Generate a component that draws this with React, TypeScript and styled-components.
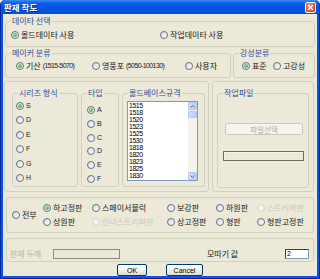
import React from "react";
import styled, { createGlobalStyle, css } from "styled-components";

const GlobalStyle = createGlobalStyle`
  html, body {
    margin: 0;
    padding: 0;
    background: #ffffff;
  }
  body {
    font-family: "Noto Sans CJK KR", "Liberation Sans", sans-serif;
  }
`;

const Window = styled.div`
  width: 320px;
  height: 279px;
  box-sizing: border-box;
  display: flex;
  flex-direction: column;
  background: #0a56e0;
  border: 1px solid #0026a8;
  border-top: none;
  border-radius: 5px 5px 0 0;
  overflow: hidden;
`;

const TitleBar = styled.div`
  height: 14px;
  flex: none;
  display: flex;
  align-items: center;
  justify-content: space-between;
  padding: 0 3px 0 3px;
  background: linear-gradient(
    180deg,
    #3a8cf8 0%,
    #0a5ee8 22%,
    #0355e2 55%,
    #0450d8 100%
  );
`;

const Title = styled.span`
  color: #ffffff;
  font-weight: bold;
  font-size: 8.5px;
  line-height: 10px;
  text-shadow: 1px 1px 0 #0a2f8a;
`;

const CloseButton = styled.div`
  width: 11px;
  height: 11px;
  box-sizing: border-box;
  border: 1px solid #ffffff;
  border-radius: 2px;
  background: radial-gradient(circle at 40% 35%, #f3a184, #d9471f 70%);
  display: flex;
  align-items: center;
  justify-content: center;
`;

const Body = styled.div`
  flex: 1;
  margin: 0 2px 2px;
  padding: 7px 2px 0;
  background: #ece9d8;
  display: flex;
  flex-direction: column;
  box-sizing: border-box;
`;

const Group = styled.div<{ $w?: number; $h: number }>`
  position: relative;
  box-sizing: border-box;
  border: 1px solid #d0d0bf;
  border-radius: 3px;
  height: ${(p) => p.$h}px;
  ${(p) => (p.$w ? `width: ${p.$w}px; flex: none;` : "flex: 1;")}
`;

const Caption = styled.span`
  position: absolute;
  top: -6px;
  left: 5px;
  padding: 0 1px;
  background: #ece9d8;
  color: #2d4f9e;
  font-size: 8px;
  line-height: 10px;
  white-space: nowrap;
`;

const Row = styled.div<{ $mt: number; $ml?: number; $gap?: number }>`
  display: flex;
  margin-top: ${(p) => p.$mt}px;
  margin-left: ${(p) => p.$ml || 0}px;
  gap: ${(p) => p.$gap || 0}px;
`;

const OptionGrid = styled.div<{ $cols: string; $pl: number; $pt: number }>`
  display: grid;
  grid-template-columns: ${(p) => p.$cols};
  align-items: center;
  height: 100%;
  box-sizing: border-box;
  padding: ${(p) => p.$pt}px 0 0 ${(p) => p.$pl}px;
`;

const PartGrid = styled(OptionGrid)`
  grid-template-rows: 14px 14px;
  align-content: center;
`;

const SpanTwoRows = styled.div`
  grid-row: 1 / span 2;
`;

const Stack = styled.div<{ $pl: number; $pt: number; $gap: number }>`
  display: flex;
  flex-direction: column;
  gap: ${(p) => p.$gap}px;
  padding: ${(p) => p.$pt}px 0 0 ${(p) => p.$pl}px;
`;

const Panel = styled.div<{ $pl: number }>`
  display: flex;
  gap: 3px;
  height: 100%;
  box-sizing: border-box;
  padding: 11px 0 0 ${(p) => p.$pl}px;
`;

const Option = styled.label<{ $off?: boolean }>`
  display: flex;
  align-items: center;
  gap: 2px;
  height: 8px;
  font-size: 8px;
  line-height: 8px;
  white-space: nowrap;
  color: ${(p) => (p.$off ? "#cbc8b9" : "#1a1a1a")};
`;

const Circle = styled.span<{ $on?: boolean; $off?: boolean }>`
  position: relative;
  flex: none;
  width: 8px;
  height: 8px;
  box-sizing: border-box;
  border-radius: 50%;
  border: 1px solid ${(p) => (p.$off ? "#d3d1c6" : "#5d7194")};
  background: ${(p) =>
    p.$off ? "#f4f3ee" : "linear-gradient(135deg, #dcdad0, #ffffff)"};
  ${(p) =>
    p.$on &&
    css`
      &::after {
        content: "";
        position: absolute;
        left: 1px;
        top: 1px;
        width: 4px;
        height: 4px;
        border-radius: 50%;
        background: radial-gradient(circle at 35% 35%, #8ee08e, #2a9a2a);
      }
    `}
`;

const Num = styled.span`
  font-family: "Liberation Sans", sans-serif;
  font-size: 7px;
  letter-spacing: -0.6px;
`;

const Letter = styled.span`
  font-family: "Liberation Sans", sans-serif;
  font-size: 7px;
`;

const ListBox = styled.div`
  width: 71px;
  height: 80px;
  box-sizing: border-box;
  border: 1px solid #7f9db9;
  background: #ffffff;
  display: flex;
`;

const ListItems = styled.div`
  flex: 1;
  overflow: hidden;
  padding-left: 1px;
  font-family: "Liberation Sans", sans-serif;
  font-size: 7px;
  line-height: 7px;
  letter-spacing: -0.5px;
  color: #000000;
`;

const ScrollBar = styled.div`
  width: 9px;
  flex: none;
  display: flex;
  flex-direction: column;
  background: #f3f2ec;
`;

const ScrollButton = styled.div<{ $mt?: number }>`
  height: ${(p) => (p.$mt ? 7 : 8)}px;
  margin-top: ${(p) => p.$mt || 0}px;
  box-sizing: border-box;
  border: 1px solid #b4c8f4;
  border-radius: 1px;
  background: linear-gradient(90deg, #d2defc, #b8cbf7);
  display: flex;
  align-items: center;
  justify-content: center;
`;

const Track = styled.div`
  flex: 1;
`;

const FileButton = styled.div`
  width: 78px;
  height: 12px;
  margin: 29px 0 0 7px;
  box-sizing: border-box;
  border: 1px solid #cbc9bc;
  border-radius: 2px;
  background: #f5f4ee;
  color: #b2afa1;
  font-size: 7.5px;
  display: flex;
  align-items: center;
  justify-content: center;
`;

const Progress = styled.div`
  width: 81px;
  height: 10px;
  margin: 16px 0 0 5px;
  box-sizing: border-box;
  border: 1px solid #6d6d68;
  box-shadow: inset 1px 1px 0 #f4f3ee;
`;

const FileColumn = styled.div`
  display: flex;
  flex-direction: column;
`;

const FieldRow = styled.div`
  display: flex;
  align-items: center;
  padding: 10px 0 0 3px;
`;

const FieldLabel = styled.span<{ $w: number; $ml?: number; $off?: boolean }>`
  width: ${(p) => p.$w}px;
  margin-left: ${(p) => p.$ml || 0}px;
  font-size: 8px;
  line-height: 10px;
  white-space: nowrap;
  color: ${(p) => (p.$off ? "#b9b6a7" : "#1a1a1a")};
`;

const TextBox = styled.div<{ $w: number; $off?: boolean }>`
  width: ${(p) => p.$w}px;
  height: 10px;
  box-sizing: border-box;
  border: 1px solid ${(p) => (p.$off ? "#8a8980" : "#7f9db9")};
  ${(p) => !p.$off && "border-top-color: #404040; border-left-color: #404040;"}
  background: ${(p) => (p.$off ? "transparent" : "#ffffff")};
  font-family: "Liberation Sans", sans-serif;
  font-size: 7px;
  line-height: 8px;
  padding-left: 1px;
  color: #000000;
`;

const ButtonRow = styled.div`
  display: flex;
  justify-content: center;
  gap: 19px;
  margin-top: 2px;
`;

const PushButton = styled.div<{ $w: number }>`
  width: ${(p) => p.$w}px;
  height: 12px;
  box-sizing: border-box;
  border: 1px solid #003c74;
  border-radius: 2px;
  background: linear-gradient(180deg, #ffffff, #f0efe8 60%, #dcdbd2);
  font-family: "Liberation Sans", sans-serif;
  font-size: 7px;
  color: #000000;
  display: flex;
  align-items: center;
  justify-content: center;
`;

type RadioProps = { on?: boolean; off?: boolean; children: React.ReactNode };

const Radio = ({ on, off, children }: RadioProps) => (
  <Option $off={off}>
    <Circle $on={on} $off={off} />
    {children}
  </Option>
);

const Arrow = ({ up }: { up?: boolean }) => (
  <svg width="5" height="3" viewBox="0 0 5 3">
    <path
      d={up ? "M0.5 2.5 L2.5 0.5 L4.5 2.5" : "M0.5 0.5 L2.5 2.5 L4.5 0.5"}
      fill="none"
      stroke="#4d6185"
      strokeWidth="1"
    />
  </svg>
);

const series = ["S", "D", "E", "F", "G", "H"];
const types = ["A", "B", "C", "D", "E", "F"];
const moldSizes = [
  "1515",
  "1518",
  "1520",
  "1523",
  "1525",
  "1530",
  "1818",
  "1820",
  "1823",
  "1825",
  "1830",
];

export default function App() {
  return (
    <>
      <GlobalStyle />
      <Window>
        <TitleBar>
          <Title>판재 작도</Title>
          <CloseButton>
            <svg width="7" height="7" viewBox="0 0 7 7">
              <path
                d="M1 1 L6 6 M6 1 L1 6"
                stroke="#ffffff"
                strokeWidth="1.4"
              />
            </svg>
          </CloseButton>
        </TitleBar>
        <Body>
          <Group $h={23}>
            <Caption>데이타 선택</Caption>
            <OptionGrid $cols="149px 1fr" $pl={5} $pt={2}>
              <Radio on>몰드데이타 사용</Radio>
              <Radio>작업데이타 사용</Radio>
            </OptionGrid>
          </Group>

          <Row $mt={6} $gap={2}>
            <Group $w={226} $h={25}>
              <Caption>메이커 분류</Caption>
              <OptionGrid $cols="76px 93px auto" $pl={10} $pt={1}>
                <Radio on>
                  기산 <Num>(1515-5070)</Num>
                </Radio>
                <Radio>
                  영풍포 <Num>(5050-100130)</Num>
                </Radio>
                <Radio>사용자</Radio>
              </OptionGrid>
            </Group>
            <Group $h={25}>
              <Caption>강성분류</Caption>
              <OptionGrid $cols="31px auto" $pl={8} $pt={1}>
                <Radio on>표준</Radio>
                <Radio>고강성</Radio>
              </OptionGrid>
            </Group>
          </Row>

          <Row $mt={3} $ml={-1} $gap={3}>
            <Group $w={205} $h={111}>
              <Panel $pl={7}>
                <Group $w={66} $h={94}>
                  <Caption>시리즈 형식</Caption>
                  <Stack $pl={3} $pt={8} $gap={6.4}>
                    {series.map((s, i) => (
                      <Radio key={s} on={i === 0}>
                        <Letter>{s}</Letter>
                      </Radio>
                    ))}
                  </Stack>
                </Group>
                <Group $w={38} $h={94}>
                  <Caption>타입</Caption>
                  <Stack $pl={5} $pt={12} $gap={5.8}>
                    {types.map((t, i) => (
                      <Radio key={t} on={i === 0}>
                        <Letter>{t}</Letter>
                      </Radio>
                    ))}
                  </Stack>
                </Group>
                <Group $w={83} $h={94}>
                  <Caption>몰드베이스규격</Caption>
                  <Stack $pl={4} $pt={7} $gap={0}>
                    <ListBox>
                      <ListItems>
                        {moldSizes.map((m) => (
                          <div key={m}>{m}</div>
                        ))}
                      </ListItems>
                      <ScrollBar>
                        <ScrollButton>
                          <Arrow up />
                        </ScrollButton>
                        <ScrollButton $mt={1} />
                        <Track />
                        <ScrollButton>
                          <Arrow />
                        </ScrollButton>
                      </ScrollBar>
                    </ListBox>
                  </Stack>
                </Group>
              </Panel>
            </Group>
            <Group $w={102} $h={111}>
              <Panel $pl={4}>
                <Group $w={92} $h={95}>
                  <Caption>작업파일</Caption>
                  <FileColumn>
                    <FileButton>파일선택</FileButton>
                    <Progress />
                  </FileColumn>
                </Group>
              </Panel>
            </Group>
          </Row>

          <Row $mt={5} $ml={1}>
            <Group $w={308} $h={36}>
              <PartGrid $cols="31px 49px 75px 49px 41px auto" $pl={5} $pt={0}>
                <SpanTwoRows>
                  <Radio>전부</Radio>
                </SpanTwoRows>
                <Radio on>하고정판</Radio>
                <Radio>스페이서블럭</Radio>
                <Radio>보강판</Radio>
                <Radio>하원판</Radio>
                <Radio off>스트리퍼판</Radio>
                <Radio>상원판</Radio>
                <Radio off>런너스트리퍼판</Radio>
                <Radio>상고정판</Radio>
                <Radio>형판</Radio>
                <Radio>형판고정판</Radio>
              </PartGrid>
            </Group>
          </Row>

          <Row $mt={5} $ml={1}>
            <Group $w={308} $h={24}>
              <FieldRow>
                <FieldLabel $w={43} $off>
                  판재 두께
                </FieldLabel>
                <TextBox $w={67} $off />
                <FieldLabel $w={78} $ml={87}>
                  모따기 값
                </FieldLabel>
                <TextBox $w={24}>2</TextBox>
              </FieldRow>
            </Group>
          </Row>

          <ButtonRow>
            <PushButton $w={30}>OK</PushButton>
            <PushButton $w={37}>Cancel</PushButton>
          </ButtonRow>
        </Body>
      </Window>
    </>
  );
}
